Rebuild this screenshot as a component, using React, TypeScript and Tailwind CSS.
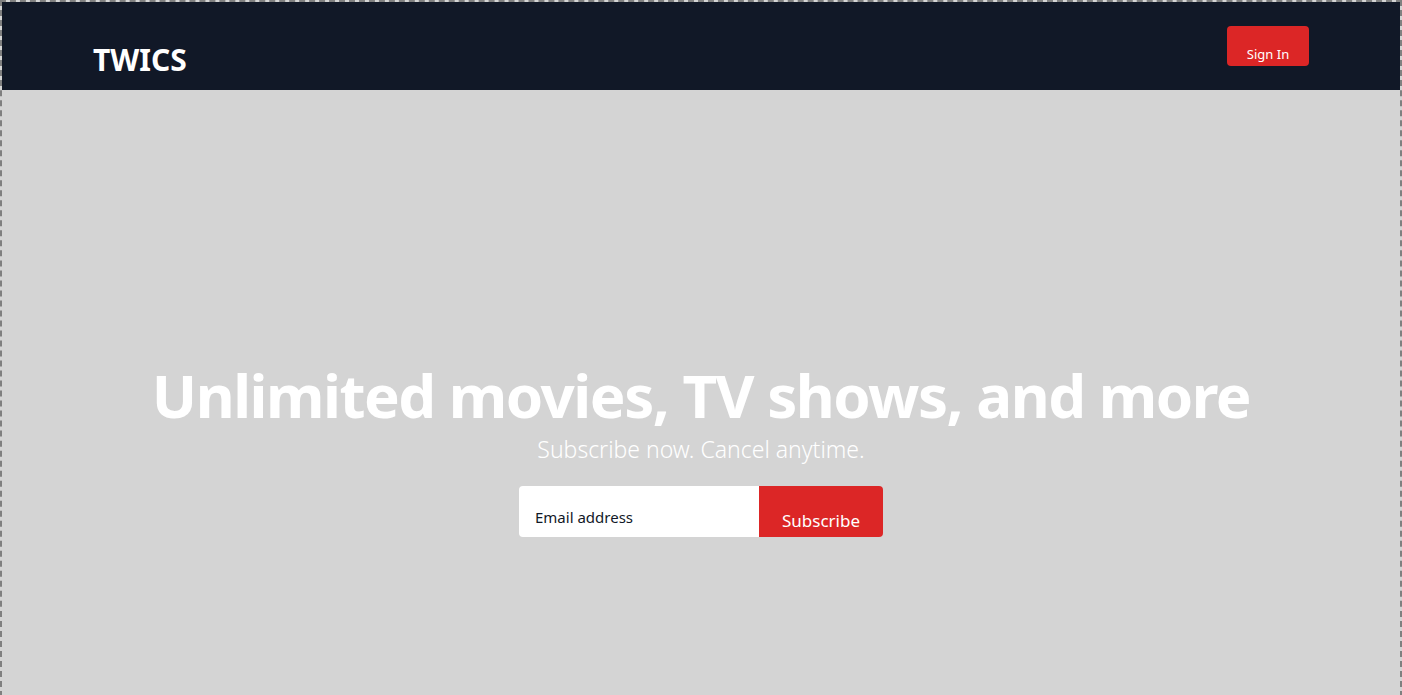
export default function App() {
  return (
    <div
      className="min-h-screen border-2 border-dashed border-[#808080] bg-[#d4d4d4] text-white"
      style={{ fontFamily: '"Noto Sans", "Open Sans", sans-serif' }}
    >
      <header className="flex h-[88px] justify-between bg-[#111827] px-[91px]">
        <div className="pt-[43px] text-[30px] font-bold leading-none">TWICS</div>
        <div className="pt-[24px]">
          <button className="flex h-10 w-[82px] items-end justify-center rounded bg-[#dc2626] pb-[2px] text-[13px] text-white">
            Sign In
          </button>
        </div>
      </header>

      <main className="flex h-[605px] flex-col items-center justify-start pt-[273px]">
        <h1 className="text-[60px] font-bold leading-[64px] tracking-tight">
          Unlimited movies, TV shows, and more
        </h1>
        <p className="mt-[6px] text-[23px] font-light leading-8">Subscribe now. Cancel anytime.</p>
        <form className="mt-[21px] flex" onSubmit={(e) => e.preventDefault()}>
          <input
            type="email"
            placeholder="Email address"
            className="h-[51px] w-[240px] rounded-l bg-white px-4 pt-[10px] text-[15px] text-gray-900 placeholder:text-[#111827] focus:outline-none"
          />
          <button className="flex h-[51px] w-[124px] items-end justify-center rounded-r bg-[#dc2626] pb-[4px] text-[17px] text-white">
            Subscribe
          </button>
        </form>
      </main>
    </div>
  );
}
